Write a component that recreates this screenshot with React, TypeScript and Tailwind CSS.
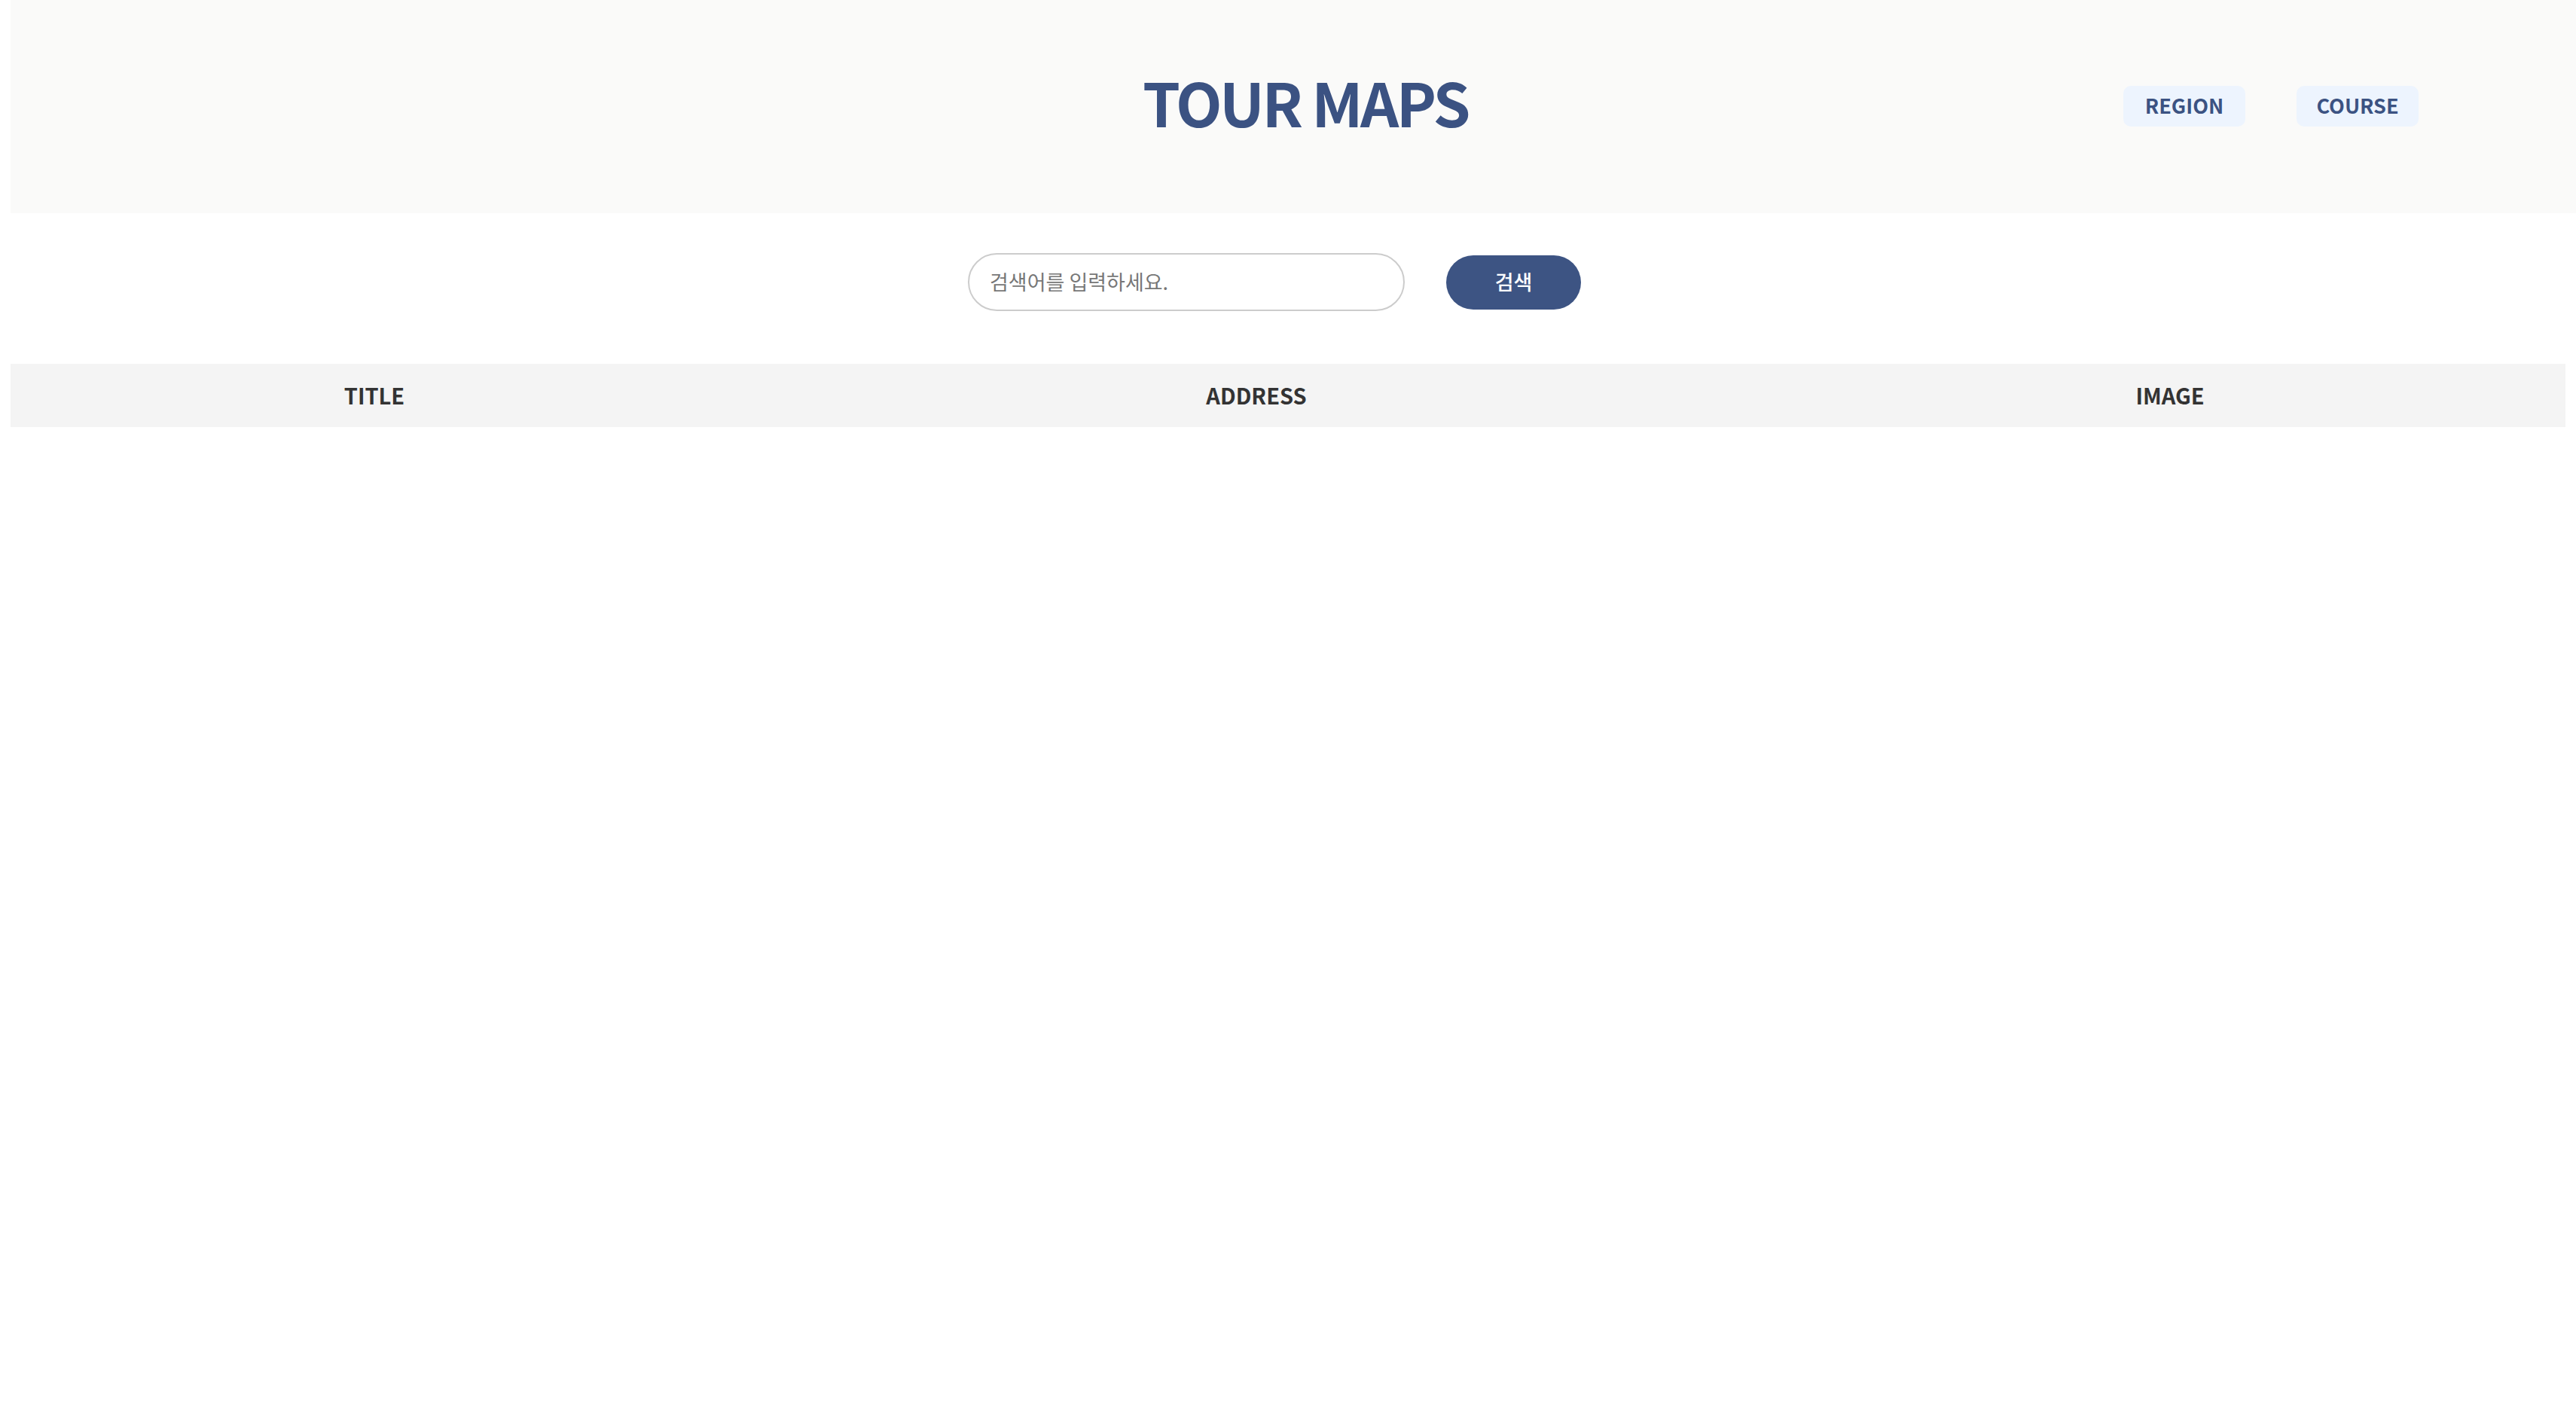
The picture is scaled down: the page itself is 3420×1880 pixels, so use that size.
import React from "react";

const navItems = ["REGION", "COURSE"];
const columns = [
    { label: "TITLE", width: "w-[966px]" },
    { label: "ADDRESS", width: "w-[1376px]" },
    { label: "IMAGE", width: "w-[1050px]" },
];

export default function App() {
    return (
        <div className="min-h-screen bg-white font-['Noto_Sans_CJK_KR','Noto_Sans',sans-serif] antialiased">
            <header className="ml-[14px] h-[283px] bg-[#fafaf9] flex items-center">
                <h1 className="ml-[1503px] -mt-[16px] text-[80px] leading-none font-bold tracking-[-3.5px] text-[#3b5282]">
                    TOUR MAPS
                </h1>
                <nav className="ml-auto mr-[209px] flex items-center gap-[68px] -mt-[2px]">
                    {navItems.map((item) => (
                        <button
                            key={item}
                            className="w-[162px] h-[54px] rounded-[10px] bg-[#edf4fe] text-[27px] font-bold text-[#3b5282] flex items-center justify-center"
                        >
                            {item}
                        </button>
                    ))}
                </nav>
            </header>

            <div className="mt-[53px] ml-[1285px] flex items-center gap-[55px]">
                <div className="w-[580px] h-[77px] rounded-full border-2 border-[#cccccc] bg-white flex items-center pl-[27px]">
                    <input
                        type="text"
                        placeholder="검색어를 입력하세요."
                        className="w-full bg-transparent outline-none text-[27px] text-[#333] placeholder:text-[#777]"
                    />
                </div>
                <button className="w-[179px] h-[72px] rounded-full bg-[#3d5483] text-white text-[27px] font-medium flex items-center justify-center">
                    검색
                </button>
            </div>

            <div className="mt-[70px] mx-[14px] h-[84px] bg-[#f4f4f4] flex items-center">
                {columns.map((col) => (
                    <div
                        key={col.label}
                        className={`${col.width} text-center text-[29px] font-bold text-[#333]`}
                    >
                        {col.label}
                    </div>
                ))}
            </div>
        </div>
    );
}
